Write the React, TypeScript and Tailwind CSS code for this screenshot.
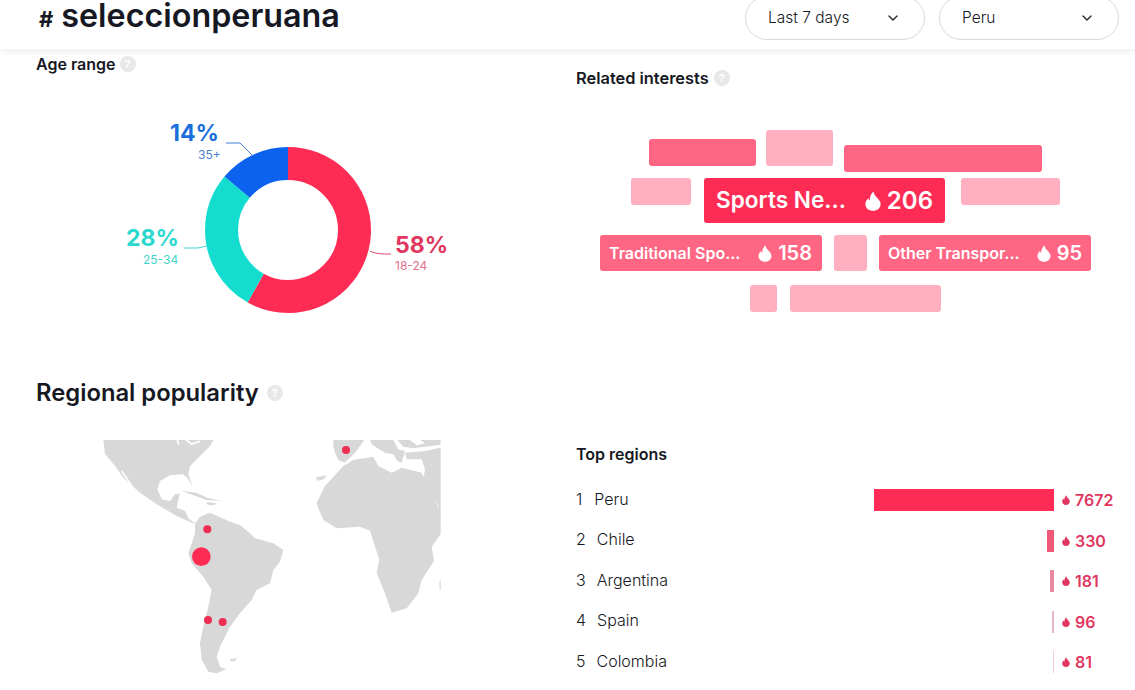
import { ChevronDown } from "lucide-react"

const font = { fontFamily: "Inter, 'Noto Sans', sans-serif" }

const Flame = ({ className }: { className: string }) => (
  <svg viewBox="0 0 16 20" className={className} fill="currentColor">
    <path d="M8.6 0.4C9 3.4 10.6 5 12.6 7.2C14.4 9.2 15.6 11 15.6 13C15.6 17 12.3 19.8 8 19.8C3.7 19.8 0.4 17 0.4 13C0.4 10.4 1.8 8.6 3.4 7.2C3.6 8.4 4 9 4.8 9.4C4.6 6 6 2.4 8.6 0.4Z" />
  </svg>
)

const Help = () => (
  <span className="flex h-4 w-4 items-center justify-center rounded-full bg-[#e8e8e8] text-[11px] font-semibold leading-none text-white">
    ?
  </span>
)

const Select = ({ label, width }: { label: string; width: string }) => (
  <div className={`flex h-[44px] items-center justify-between rounded-full border border-[#d9d9d9] bg-white pl-[22px] pr-[23px] text-[15.5px] font-light text-[#161823] ${width}`}>
    <span>{label}</span>
    <ChevronDown className="h-4 w-4 text-[#222]" strokeWidth={2} />
  </div>
)

const Donut = () => (
  <div className="relative h-[240px] w-[576px]">
    <svg viewBox="0 0 576 240" className="absolute inset-0 h-full w-full" fill="none">
      <g transform="rotate(-90 288 120)" strokeWidth="33">
        <circle cx="288" cy="120" r="66.5" stroke="#fe2c55" strokeDasharray="242.3 417.8" />
        <circle cx="288" cy="120" r="66.5" stroke="#14ddd0" strokeDasharray="117 417.8" strokeDashoffset="-242.3" />
        <circle cx="288" cy="120" r="66.5" stroke="#0b62ee" strokeDasharray="58.5 417.8" strokeDashoffset="-359.3" />
      </g>
      <path d="M226 33H240L253 46" stroke="#3f7fd8" />
      <path d="M184 138H198L207 136" stroke="#3fdcd2" />
      <path d="M370 141C376 144 382 144 391 144" stroke="#e0456c" />
    </svg>
    <div className="absolute left-[170px] top-[12px] text-[23px] font-bold leading-none text-[#1b6fdc]">14%</div>
    <div className="absolute left-[198px] top-[39px] text-[12px] leading-none text-[#4a82d0]">35+</div>
    <div className="absolute left-[126px] top-[117px] text-[23px] font-bold leading-none text-[#2ad8cd]">28%</div>
    <div className="absolute left-[143px] top-[144px] text-[12px] leading-none text-[#45d4ca]">25-34</div>
    <div className="absolute left-[395px] top-[124px] text-[23px] font-bold leading-none text-[#e0365f]">58%</div>
    <div className="absolute left-[395px] top-[150px] text-[12px] leading-none text-[#e0708c]">18-24</div>
  </div>
)

const TagCloud = () => (
  <div className="relative h-[240px] w-[559px]">
    <div className="absolute left-[73px] top-[19px] h-[27px] w-[107px] rounded-[3px] bg-[#ff6683]" />
    <div className="absolute left-[190px] top-[10px] h-[36px] w-[67px] rounded-[3px] bg-[#ffafc0]" />
    <div className="absolute left-[268px] top-[25px] h-[27px] w-[198px] rounded-[3px] bg-[#ff6683]" />
    <div className="absolute left-[55px] top-[58px] h-[27px] w-[60px] rounded-[3px] bg-[#ffafc0]" />
    <div className="absolute left-[128px] top-[58px] flex h-[45px] w-[241px] items-center justify-between rounded-[3px] bg-[#fe2c55] px-3 text-[24px] font-semibold leading-none text-white">
      <span className="text-[22.6px]">Sports Ne...</span>
      <span className="flex items-center gap-[6px]">
        <Flame className="h-[20px] w-[16px]" />
        206
      </span>
    </div>
    <div className="absolute left-[385px] top-[58px] h-[27px] w-[99px] rounded-[3px] bg-[#ffafc0]" />
    <div className="absolute left-[24px] top-[115px] flex h-[36px] w-[222px] items-center justify-between rounded-[3px] bg-[#ff6683] pl-[9px] pr-[10px] text-[16px] font-semibold leading-none text-white">
      <span>Traditional Spo...</span>
      <span className="flex items-center gap-[6px] text-[20px]">
        <Flame className="h-[17px] w-[14px]" />
        158
      </span>
    </div>
    <div className="absolute left-[258px] top-[115px] h-[36px] w-[33px] rounded-[3px] bg-[#ffafc0]" />
    <div className="absolute left-[303px] top-[115px] flex h-[36px] w-[212px] items-center justify-between rounded-[3px] bg-[#ff6683] pl-[9px] pr-[9px] text-[16px] font-semibold leading-none text-white">
      <span>Other Transpor...</span>
      <span className="flex items-center gap-[6px] text-[20px]">
        <Flame className="h-[17px] w-[14px]" />
        95
      </span>
    </div>
    <div className="absolute left-[174px] top-[165px] h-[27px] w-[27px] rounded-[3px] bg-[#ffafc0]" />
    <div className="absolute left-[214px] top-[165px] h-[27px] w-[151px] rounded-[3px] bg-[#ffafc0]" />
  </div>
)

const WorldMap = () => (
  <svg viewBox="0 0 1200 780" className="h-[260px] w-[400px]">
    <g fill="#d8d8d8">
      {/* north and central america */}
      <path d="M130 30H460L450 48L420 78L390 108L385 133L398 168L385 148L370 133L330 136L300 153L292 178L305 208L330 213L345 193L360 190L355 208L350 233L375 243L385 265L408 282L395 278L350 258L290 223L240 188L190 143L165 108L135 72Z" />
      <path d="M365 183L410 188L440 203L485 213L440 210L400 196Z" />
      <path d="M440 216L470 220L462 226L442 224Z" />
      {/* south america */}
      <path d="M405 282L420 260L450 248L480 262L510 275L540 285L570 310L585 325L640 340L670 360L660 395L640 420L630 460L590 480L575 510L540 550L510 590L495 620L480 650L470 680L480 710L498 718L470 730L445 725L425 690L420 640L430 590L445 530L455 480L430 440L395 400L385 370L395 340L405 310Z" />
      <path d="M510 688L530 684L524 694L512 694Z" />
      {/* africa */}
      <path d="M850 108L880 90L940 80L955 108L995 128L1025 113L1085 128L1095 148L1135 233L1142 258V312L1115 350L1122 392L1085 450L1075 490L1040 535L995 548L975 490L950 430L958 390L930 302L900 290L830 295L790 270L775 235L770 218L795 168Z" />
      <path d="M768 142L800 136L792 148L772 152Z" />
      {/* europe and the middle east */}
      <path d="M820 30H912L900 48L885 68L875 78L855 98L835 90L825 68L820 48Z" />
      <path d="M930 30H1000L1015 58L1035 63L1025 98L1012 93L1000 73L975 68L950 53L935 43Z" />
      <path d="M1035 68L1095 63L1142 53V272L1135 228L1090 148L1095 118L1085 88L1040 88Z" />
      <path d="M1012 30H1050L1070 46L1095 40L1080 30H1142V44L1095 50L1060 55L1030 50Z" />
      <path d="M1138 455L1142 450V482L1139 478Z" />
    </g>
    <path d="M185 123L222 178" stroke="#ffffff" strokeWidth="5" />
    <path d="M352 30L356 44M378 30L395 42L420 34" stroke="#ffffff" strokeWidth="5" fill="none" />
    <g fill="#ee2d55">
      <circle cx="442" cy="298" r="12" />
      <circle cx="424" cy="380" r="28" fill="#fe2c55" />
      <circle cx="444" cy="570" r="12" />
      <circle cx="488" cy="576" r="12" />
      <circle cx="858" cy="60" r="12" />
    </g>
  </svg>
)

const regions = [
  { rank: 1, name: "Peru", gap: "gap-[12px]", bar: "w-[180px] bg-[#fe2c55]", value: "7672" },
  { rank: 2, name: "Chile", gap: "gap-[11px]", bar: "w-[7px] bg-[#f0587a]", value: "330" },
  { rank: 3, name: "Argentina", gap: "gap-[11px]", bar: "w-[4px] bg-[#e58a9f]", value: "181" },
  { rank: 4, name: "Spain", gap: "gap-[11px]", bar: "w-[2px] bg-[#eab6c2]", value: "96" },
  { rank: 5, name: "Colombia", gap: "gap-[11px]", bar: "w-[1px] bg-[#f3cdd7]", value: "81" },
]

const TopRegions = () => (
  <div className="pt-[14px]">
    <h3 className="text-[16px] font-semibold leading-5 text-[#161823]">Top regions</h3>
    <div className="mt-[25px] flex flex-col gap-[18.5px]">
      {regions.map((r) => (
        <div key={r.rank} className="flex h-[22px] items-center text-[16px] font-light text-[#161823]">
          <div className={`flex w-[298px] -mt-[3px] ${r.gap}`}>
            <span>{r.rank}</span>
            <span>{r.name}</span>
          </div>
          <div className="flex w-[180px] justify-end">
            <div className={`h-[22px] ${r.bar}`} />
          </div>
          <div className="ml-2 flex items-center gap-[5px] text-[16px] font-semibold text-[#e0365f]">
            <Flame className="h-[10px] w-[8px]" />
            {r.value}
          </div>
        </div>
      ))}
    </div>
  </div>
)

export default function App() {
  return (
    <div className="h-[690px] w-[1135px] overflow-hidden bg-white" style={font}>
      <header className="flex h-[49px] items-center justify-between pl-[39px] pr-[16px] shadow-[0_2px_8px_rgba(0,0,0,0.08)]">
        <h1 className="-mt-[17px] flex items-baseline gap-[8px] font-semibold leading-none text-[#161823]">
          <span className="text-[22px] font-bold">#</span>
          <span className="text-[32.3px]">seleccionperuana</span>
        </h1>
        <div className="-mt-[13px] flex gap-[14px]">
          <Select label="Last 7 days" width="w-[180px]" />
          <Select label="Peru" width="w-[180px]" />
        </div>
      </header>
      <main>
        <section className="grid grid-cols-[576px_559px]">
          <div className="pl-9 pt-[5px]">
            <div className="flex items-center gap-[4px] text-[16px] font-semibold leading-5 text-[#161823]">
              Age range <Help />
            </div>
          </div>
          <div className="pt-[19px]">
            <div className="flex items-center gap-[5px] text-[16.4px] font-semibold leading-5 text-[#161823]">
              Related interests <Help />
            </div>
          </div>
          <div className="mt-[22px]">
            <Donut />
          </div>
          <div className="mt-[32px]">
            <TagCloud />
          </div>
        </section>
        <section>
          <div className="flex items-center gap-[8px] pl-9 pt-[17px] text-[23.8px] font-semibold leading-8 text-[#161823]">
            Regional popularity <Help />
          </div>
          <div className="mt-[21px] grid grid-cols-[576px_559px]">
            <div className="pl-[60px]">
              <WorldMap />
            </div>
            <TopRegions />
          </div>
        </section>
      </main>
    </div>
  )
}
